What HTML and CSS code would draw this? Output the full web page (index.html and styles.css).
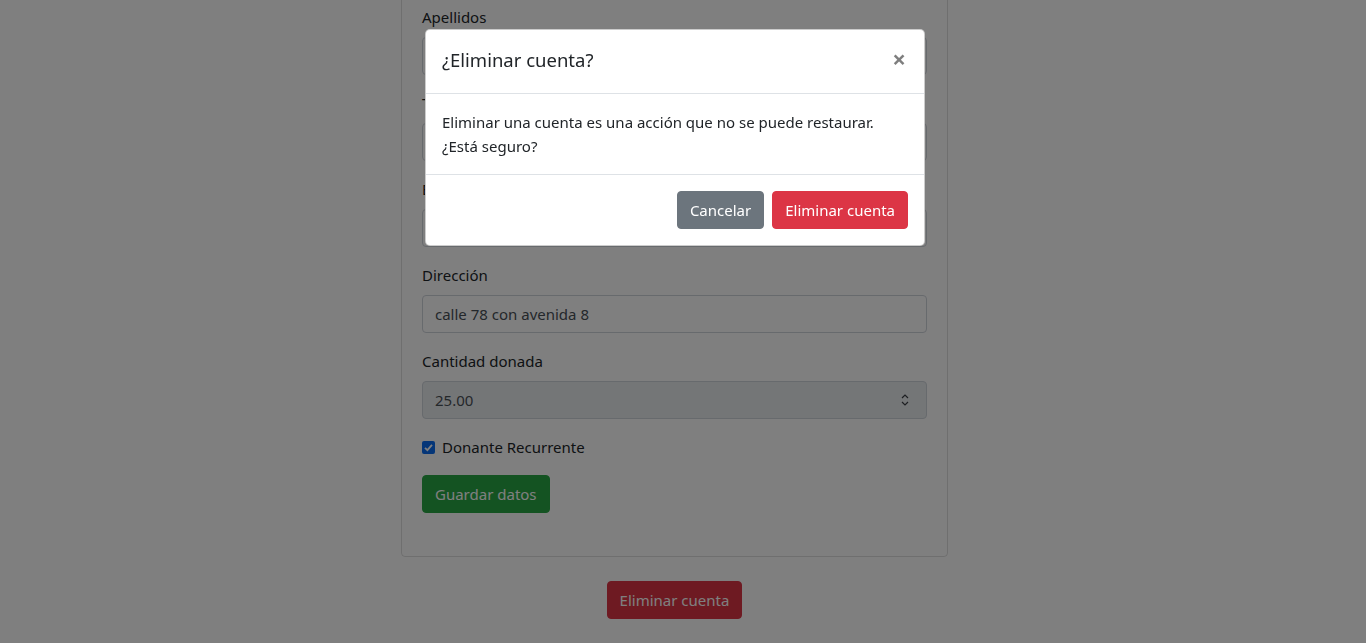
FILE: index.html
```html
<!DOCTYPE html>
<html lang="es">
<head>
<meta charset="utf-8">
<title>Cuenta</title>
<link rel="stylesheet" href="styles.css">
</head>
<body>
<div class="page">
  <div class="card">
    <form class="card-body">
      <div class="form-group">
        <label class="label">Apellidos</label>
        <div class="input"></div>
      </div>
      <div class="form-group">
        <label class="label">Teléfono</label>
        <div class="input"></div>
      </div>
      <div class="form-group">
        <label class="label">Email</label>
        <div class="input"></div>
      </div>
      <div class="form-group">
        <label class="label">Dirección</label>
        <div class="input">calle 78 con avenida 8</div>
      </div>
      <div class="form-group">
        <label class="label">Cantidad donada</label>
        <div class="input disabled">
          <span>25.00</span>
          <svg class="spin" width="10" height="16" viewBox="0 0 10 16"><path d="M2 6 L5 3 L8 6 M2 10 L5 13 L8 10" fill="none" stroke="#3a3f44" stroke-width="1.2"/></svg>
        </div>
      </div>
      <div class="form-check">
        <span class="check"><svg width="13" height="13" viewBox="0 0 13 13"><path d="M3 6.8 L5.4 9.2 L10 3.9" fill="none" stroke="#fff" stroke-width="1.8"/></svg></span>
        <span>Donante Recurrente</span>
      </div>
      <div class="actions">
        <button type="button" class="btn btn-success">Guardar datos</button>
      </div>
    </form>
  </div>
  <div class="delete-row">
    <button type="button" class="btn btn-danger">Eliminar cuenta</button>
  </div>
</div>

<div class="backdrop"></div>

<div class="modal">
  <div class="modal-content">
    <div class="modal-header">
      <h5 class="modal-title">¿Eliminar cuenta?</h5>
      <button type="button" class="close">×</button>
    </div>
    <div class="modal-body">
      <p>Eliminar una cuenta es una acción que no se puede restaurar. ¿Está seguro?</p>
    </div>
    <div class="modal-footer">
      <button type="button" class="btn btn-secondary">Cancelar</button>
      <button type="button" class="btn btn-danger">Eliminar cuenta</button>
    </div>
  </div>
</div>
</body>
</html>
```

FILE: styles.css
```css
* { box-sizing: border-box; }

html, body {
  margin: 0;
  height: 100%;
  overflow: hidden;
}

body {
  font-family: "Noto Sans", "Open Sans", sans-serif;
  font-size: 15px;
  line-height: 24px;
  color: #212529;
  background: #fff;
  padding-right: 17px;
}

.page {
  width: 547px;
  margin: 0 auto;
}

.card {
  margin-top: -16px;
  border: 1px solid rgba(0,0,0,.125);
  border-radius: 4px;
}

.card-body {
  display: block;
  padding: 20px 20px 43px 20px;
}

.form-group {
  margin-bottom: 16px;
}

.label {
  display: block;
  margin-bottom: 8px;
}

.input {
  height: 38px;
  border: 1px solid #ced4da;
  border-radius: 4px;
  padding: 6px 12px;
  color: #495057;
  display: flex;
  align-items: center;
  justify-content: space-between;
}

.input.disabled {
  background: #e9ecef;
}

.spin {
  margin-right: 4px;
}

.form-check {
  display: flex;
  align-items: center;
  gap: 7px;
  margin-bottom: 16px;
}

.check {
  width: 13px;
  height: 13px;
  border-radius: 2px;
  background: #0a6cf0;
  display: flex;
}

.btn {
  font-family: inherit;
  font-size: 15px;
  line-height: 24px;
  height: 38px;
  padding: 6px 12px;
  border: 1px solid transparent;
  border-radius: 4px;
  color: #fff;
  cursor: pointer;
}

.btn-success { background: #28a745; border-color: #28a745; }
.btn-danger { background: #dc3545; border-color: #dc3545; }
.btn-secondary { background: #6c757d; border-color: #6c757d; }

.delete-row {
  display: flex;
  justify-content: center;
  margin-top: 24px;
}

.backdrop {
  position: fixed;
  inset: 0;
  background: rgba(0,0,0,.5);
}

.modal {
  position: fixed;
  inset: 0;
  padding-right: 16px;
}

.modal-content {
  width: 500px;
  margin: 29px auto 0;
  background: #fff;
  border: 1px solid rgba(0,0,0,.2);
  border-radius: 5px;
}

.modal-header {
  display: flex;
  justify-content: space-between;
  align-items: flex-start;
  padding: 14px 16px 18px;
  border-bottom: 1px solid #dee2e6;
}

.modal-title {
  margin: 0;
  font-size: 18.5px;
  font-weight: 400;
  line-height: 31px;
}

.close {
  background: none;
  border: 0;
  padding: 16px;
  margin: -13px -14px -16px auto;
  font-family: inherit;
  font-size: 24px;
  font-weight: 700;
  line-height: 1;
  color: #000;
  opacity: .5;
}

.modal-body {
  padding: 16px;
}

.modal-body p {
  margin: 0;
}

.modal-footer {
  display: flex;
  justify-content: flex-end;
  align-items: center;
  padding: 12px;
  border-top: 1px solid #dee2e6;
}

.modal-footer .btn {
  margin: 4px;
}
```
